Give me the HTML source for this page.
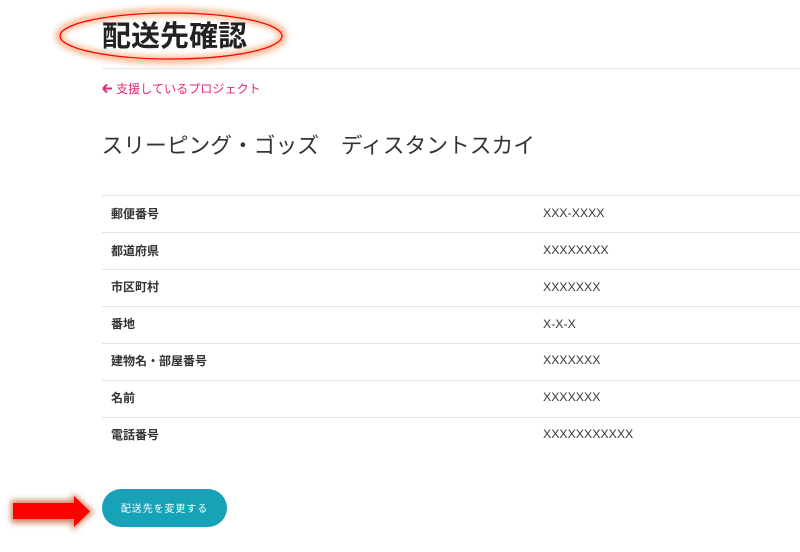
<!DOCTYPE html>
<html lang="ja">
<head>
<meta charset="utf-8">
<style>
html,body{margin:0;padding:0;background:#fff;}
body{width:800px;height:552px;overflow:hidden;position:relative;font-family:"Liberation Sans","Noto Sans CJK JP",sans-serif;color:#333;}
.wrap{position:absolute;left:0;top:0;width:800px;height:552px;filter:blur(.35px);}
.a{position:absolute;white-space:nowrap;line-height:1;}
.h{left:102px;top:23px;font-size:29px;font-weight:700;color:#222;}
.rule{position:absolute;left:102px;right:0;height:1px;background:#e4e4e4;}
.back{left:116px;top:83px;font-size:12.1px;color:#e6287a;}
.t{left:101.5px;top:135px;font-size:21.75px;color:#333;}
.l{left:111px;font-size:12px;font-weight:700;color:#333;}
.v{left:543px;font-size:12.3px;color:#3a3a3a;}
.btn{position:absolute;left:102px;top:489px;width:125px;height:38px;border-radius:19px;background:#17a2b8;color:#fff;font-size:10px;line-height:41px;text-align:center;letter-spacing:.9px;}
svg{position:absolute;left:0;top:0;}
</style>
</head>
<body>
<div class="wrap">
<svg width="800" height="552" viewBox="0 0 800 552">
<defs>
<filter id="g" x="-30%" y="-60%" width="160%" height="220%"><feGaussianBlur stdDeviation="3"/></filter>
</defs>
<ellipse cx="171" cy="36" rx="112" ry="24" fill="none" stroke="#f9a06c" stroke-width="8" opacity=".7" filter="url(#g)"/>
<ellipse cx="171" cy="36" rx="111" ry="23" fill="none" stroke="#f00" stroke-width="1.2"/>
<path d="M11 500H72V493L94 511.5L72 531V523H11Z" fill="#c4683a" opacity=".8" filter="url(#g)"/>
<path d="M13 503H74V496L90 511.5L74 527V519H13Z" fill="#f00"/>
<path d="M103 88.5H112M103 88.5L107 84.5M103 88.5L107 92.5" fill="none" stroke="#e6287a" stroke-width="2"/>
</svg>
<div class="a h">配送先確認</div>
<div class="rule" style="top:68px"></div>
<div class="a back">支援しているプロジェクト</div>
<div class="a t">スリーピング・ゴッズ　ディスタントスカイ</div>
<div class="rule" style="top:195px"></div>
<div class="rule" style="top:232px"></div>
<div class="rule" style="top:269px"></div>
<div class="rule" style="top:306px"></div>
<div class="rule" style="top:343px"></div>
<div class="rule" style="top:380px"></div>
<div class="rule" style="top:417px"></div>
<div class="a l" style="top:208px">郵便番号</div><div class="a v" style="top:207px">XXX-XXXX</div>
<div class="a l" style="top:245px">都道府県</div><div class="a v" style="top:244px">XXXXXXXX</div>
<div class="a l" style="top:281px">市区町村</div><div class="a v" style="top:281px">XXXXXXX</div>
<div class="a l" style="top:318px">番地</div><div class="a v" style="top:318px">X-X-X</div>
<div class="a l" style="top:355px">建物名・部屋番号</div><div class="a v" style="top:354px">XXXXXXX</div>
<div class="a l" style="top:392px">名前</div><div class="a v" style="top:391px">XXXXXXX</div>
<div class="a l" style="top:429px">電話番号</div><div class="a v" style="top:428px">XXXXXXXXXXX</div>
<div class="btn">配送先を変更する</div>
</div>
</body>
</html>
